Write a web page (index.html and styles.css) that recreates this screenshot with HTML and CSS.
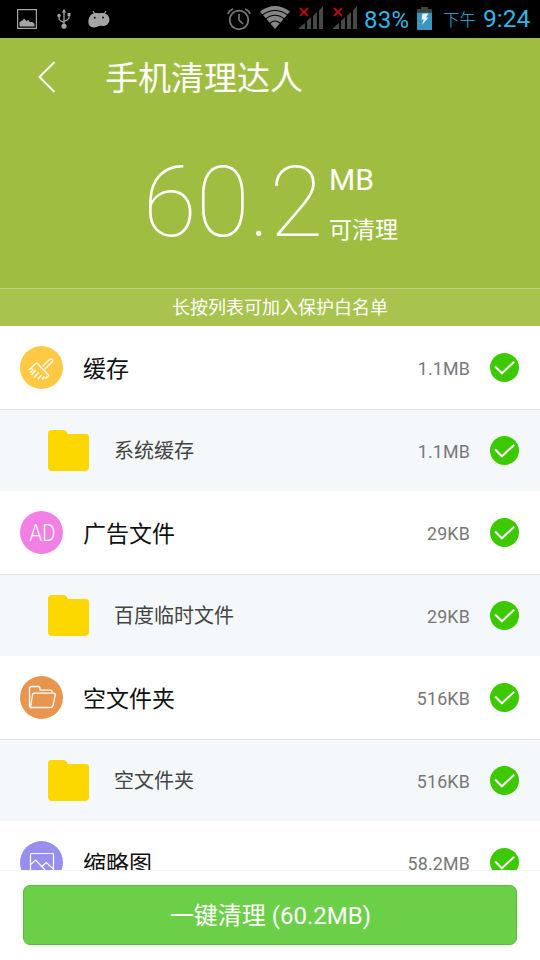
FILE: index.html
```html
<!DOCTYPE html>
<html lang="zh-CN">
<head>
<meta charset="utf-8">
<title>手机清理达人</title>
<link rel="stylesheet" href="styles.css">
</head>
<body>
<svg class="defs" width="0" height="0">
  <symbol id="check" viewBox="0 0 29 29"><circle cx="14.500" cy="14.500" r="14.500" fill="#3cc900"/><path d="M5.100 13.500l6.800 6.800L24.200 8.800" fill="none" stroke="#fff" stroke-width="2"/></symbol>
  <symbol id="folder" viewBox="0 0 41 41"><path d="M0 4q0-4 4-4h11.500q2 0 3 1.500l1.500 2.500H38q3 0 3 3v30q0 4-4 4H4q-4 0-4-4z" fill="#fcd800"/></symbol>
  <symbol id="signal" viewBox="0 0 26 24"><path d="M1 2l8 8M9 2l-8 8" stroke="#b80b0b" stroke-width="1.900"/><path d="M0 23v-1l6-5v6zM8 23v-8l4-4v12zM14 23V10l4-4v17zM20 23V4.500L24 0v23z" fill="#484848"/></symbol>
</svg>
<div class="screen">
  <div class="status">
    <svg class="st-pic" viewBox="0 0 20 20"><path d="M.6.6h18.800v18.800H.6z" fill="none" stroke="#a5a5a5" stroke-width="1.200"/><path d="M2.500 17.500v-4.500l3-1.500 1.500-2 2.500 2.500 1.500-1 2 2h2.500l2 2v2.500z" fill="#a5a5a5"/></svg>
    <svg class="st-usb" viewBox="0 0 14 20"><path d="M7 2v15M2 7v2.500q0 2 5 4M12 6v2.500q0 2-5 4" fill="none" stroke="#a0a0a0" stroke-width="1.300"/><path d="M7 0l2.200 3.500H4.800zM10.500 4h3v3h-3z" fill="#a0a0a0"/><circle cx="2" cy="6.500" r="1.700" fill="#a0a0a0"/><circle cx="7" cy="17.200" r="2.600" fill="#a0a0a0"/></svg>
    <svg class="st-droid" viewBox="0 0 22 18"><path d="M5 1l2 3M18 1l-2 3" stroke="#a5a5a5" stroke-width="1.200"/><path d="M1.500 7C3 3 7 2.500 11 3.200c6-1.200 9.500 1.300 10.300 5.300.7 4-2.300 7.500-6.300 7.500-2 0-3-.5-4.500.3-2.500 1.400-6 1.400-8 .2C-.3 15 0 10 1.500 7z" fill="#a5a5a5"/><circle cx="6.700" cy="7.800" r="1" fill="#111"/><circle cx="15" cy="7.500" r="1" fill="#111"/></svg>
    <svg class="st-alarm" viewBox="0 0 24 24"><circle cx="12" cy="13" r="9.300" fill="none" stroke="#777" stroke-width="1.800"/><path d="M12 7v6l4 4M.8 7Q2 3.500 6 2M18 2q4 1.500 5.200 5" fill="none" stroke="#777" stroke-width="1.700"/></svg>
    <svg class="st-wifi" viewBox="0 0 30 23"><path d="M0 5.500Q15-5.500 30 5.500L15 23z" fill="#858585"/><path d="M1.500 9.500Q15-.5 28.500 9.500M5 13.500Q15 5 25 13.500M9 18Q15 12 21 18" fill="none" stroke="#000" stroke-width="1.100"/></svg>
    <svg class="st-sig"><use href="#signal"/></svg>
    <svg class="st-sig st-sig2"><use href="#signal"/></svg>
    <span class="pct">83%</span>
    <svg class="st-bat" viewBox="0 0 15 23"><path d="M4 0h7v2h4v3.500H0V2h4z" fill="#424242"/><path d="M0 5.500h15V23H0z" fill="#3996bd"/><path d="M5.500 6.500h6L9 10.500h2.500L5 18l1.800-5.500H4.500z" fill="#e8f4f8"/></svg>
    <span class="ampm">下午</span>
    <span class="clock">9:24</span>
  </div>
  <div class="header">
    <div class="bar">
      <svg class="back" viewBox="0 0 18 32"><path d="M16.500 1L1.500 16l15 15" fill="none" stroke="#fff" stroke-width="2"/></svg>
      <h1 class="title">手机清理达人</h1>
    </div>
    <div class="total">
      <span class="num">60.2</span>
      <div class="units"><span class="mb">MB</span><span class="can">可清理</span></div>
    </div>
    <div class="tip">长按列表可加入保护白名单</div>
  </div>
  <div class="list">
    <div class="row">
      <svg class="badge" viewBox="0 0 43 43"><circle cx="21.500" cy="21.500" r="21.500" fill="#ffc944"/><path d="M16.500 16.800l12.300 12.400M22.500 20.500l7.200-7.200q1.300-1 2.500 0 1.200 1.300 0 2.500l-7.400 7.400M16.500 16.800L8.800 24M28.800 29.200l-3.500 3.500M11.700 22.500l1.200 1.200-2.700 3.300M15.500 24l-4 5M18.500 26.500l-4.500 5M21.500 29l-3.500 4M24.500 30.500l-2.500 3" fill="none" stroke="#fff" stroke-width="1.300"/></svg>
      <span class="name">缓存</span><span class="size">1.1MB</span><svg class="check"><use href="#check"/></svg>
    </div>
    <div class="row sub"><svg class="folder"><use href="#folder"/></svg><span class="name">系统缓存</span><span class="size">1.1MB</span><svg class="check"><use href="#check"/></svg></div>
    <div class="row">
      <span class="badge ad"><span class="ad-text">AD</span></span>
      <span class="name">广告文件</span><span class="size">29KB</span><svg class="check"><use href="#check"/></svg>
    </div>
    <div class="row sub"><svg class="folder"><use href="#folder"/></svg><span class="name">百度临时文件</span><span class="size">29KB</span><svg class="check"><use href="#check"/></svg></div>
    <div class="row">
      <svg class="badge" viewBox="0 0 43 43"><circle cx="21.500" cy="21.500" r="21.500" fill="#e8964f"/><path d="M10.500 31.500q-1-.3-1-1.500V12.500q0-2 2-2H18q2 0 2 2v1.700h10.500q1.800 0 1.800 2M10.500 31.500l2-12.500q.3-1.800 2-1.800h19q2 0 1.700 1.800l-2.200 10.500q-.5 2-2.500 2z" fill="none" stroke="#fff" stroke-width="1.300"/></svg>
      <span class="name">空文件夹</span><span class="size">516KB</span><svg class="check"><use href="#check"/></svg>
    </div>
    <div class="row sub"><svg class="folder"><use href="#folder"/></svg><span class="name">空文件夹</span><span class="size">516KB</span><svg class="check"><use href="#check"/></svg></div>
    <div class="row">
      <svg class="badge" viewBox="0 0 43 43"><circle cx="21.500" cy="21.500" r="21.500" fill="#968fef"/><rect x="10.500" y="12.500" width="23" height="20" rx="1" fill="none" stroke="#fff" stroke-width="1.200"/><path d="M10.500 23.500l5.200-4.500L25 29M22 25.500l4.200-4 7.300 6.500" fill="none" stroke="#fff" stroke-width="1.200"/></svg>
      <span class="name">缩略图</span><span class="size">58.2MB</span><svg class="check"><use href="#check"/></svg>
    </div>
  </div>
  <div class="footer"><button class="clean">一键清理 (60.2MB)</button></div>
</div>
</body>
</html>
```
FILE: styles.css
```css
* { box-sizing: border-box; }
body { margin: 0; font-family: Roboto, "Noto Sans CJK SC", sans-serif; }
svg { display: block; flex: none; }
.defs { position: absolute; }
.screen { width: 540px; height: 960px; display: flex; flex-direction: column; overflow: hidden; background: #fff; }
.status { height: 38px; flex: none; background: #000; display: flex; align-items: flex-start; color: #33b5e5; white-space: nowrap; }
.st-pic { width: 20px; height: 20px; margin: 9px 0 0 17px; }
.st-usb { width: 14px; height: 20px; margin: 9px 0 0 20px; }
.st-droid { width: 22px; height: 18px; margin: 10px 0 0 17px; }
.st-alarm { width: 24px; height: 24px; margin: 7px 0 0 117px; }
.st-wifi { width: 30px; height: 23px; margin: 6px 0 0 9px; }
.st-sig { width: 26px; height: 24px; margin: 6px 0 0 9px; }
.st-sig2 { margin-left: 8px; }
.pct { width: 53px; margin-left: 5px; font-size: 24px; line-height: 40px; letter-spacing: .3px; }
.st-bat { width: 15px; height: 23px; margin-top: 7px; }
.ampm { width: 40px; margin-left: 11px; font-size: 16.500px; line-height: 42px; font-weight: 300; }
.clock { font-size: 24.500px; line-height: 38px; }
.header { height: 288px; flex: none; background: #9fbe41; color: #fff; display: flex; flex-direction: column; }
.bar { height: 80px; display: flex; align-items: center; }
.back { width: 18px; height: 32px; margin: -2px 0 0 38px; }
.title { margin: 1px 0 0 49px; font-size: 33px; line-height: 80px; font-weight: 400; }
.total { height: 170px; display: flex; }
.num { width: 183px; margin-left: 143px; font-size: 98px; line-height: 170px; font-weight: 100; letter-spacing: -.6px; }
.units { display: flex; flex-direction: column; margin: 40px 0 0 3px; }
.mb { font-size: 30px; line-height: 44px; }
.can { font-size: 23px; line-height: 34px; margin-top: 12px; }
.tip { height: 38px; border-top: 1px solid #bdd27d; background: #a8c44f; text-align: center; font-size: 18px; line-height: 37px; padding-left: 20px; }
.list { height: 544px; flex: none; overflow: hidden; }
.row { height: 84px; border-bottom: 1px solid #e3e5e5; padding: 0 21px 0 20px; display: flex; align-items: center; background: #fff; }
.badge { width: 43px; height: 43px; flex: none; }
.ad { border-radius: 50%; background: #f17fe5; color: #fff; font-size: 24px; font-weight: 300; line-height: 44px; text-align: center; }
.ad-text { display: inline-block; margin-left: 1px; transform: scaleX(.86); }
.name { margin-left: 20px; flex: 1; padding-bottom: 2px; font-size: 23px; color: #111; }
.size { font-size: 17.800px; color: #777; letter-spacing: .2px; padding-top: 1px; }
.check { width: 29px; height: 29px; margin-left: 20px; }
.sub { height: 81px; border: 0; background: #f4f8fa; padding-left: 48px; }
.folder { width: 41px; height: 41px; }
.sub .name { margin-left: 25px; padding-bottom: 2px; font-size: 20px; color: #444; }
.footer { height: 90px; flex: none; border-top: 1px solid #f4f5f5; padding: 14px 23px 15px; background: #fff; }
.clean { width: 494px; height: 60px; padding: 1px 0 0 1px; border: 1px solid #5bbd3b; border-radius: 7px; background: #6bcf47; color: #fff; font: 24px/58px Roboto, "Noto Sans CJK SC", sans-serif; display: block; }
```
